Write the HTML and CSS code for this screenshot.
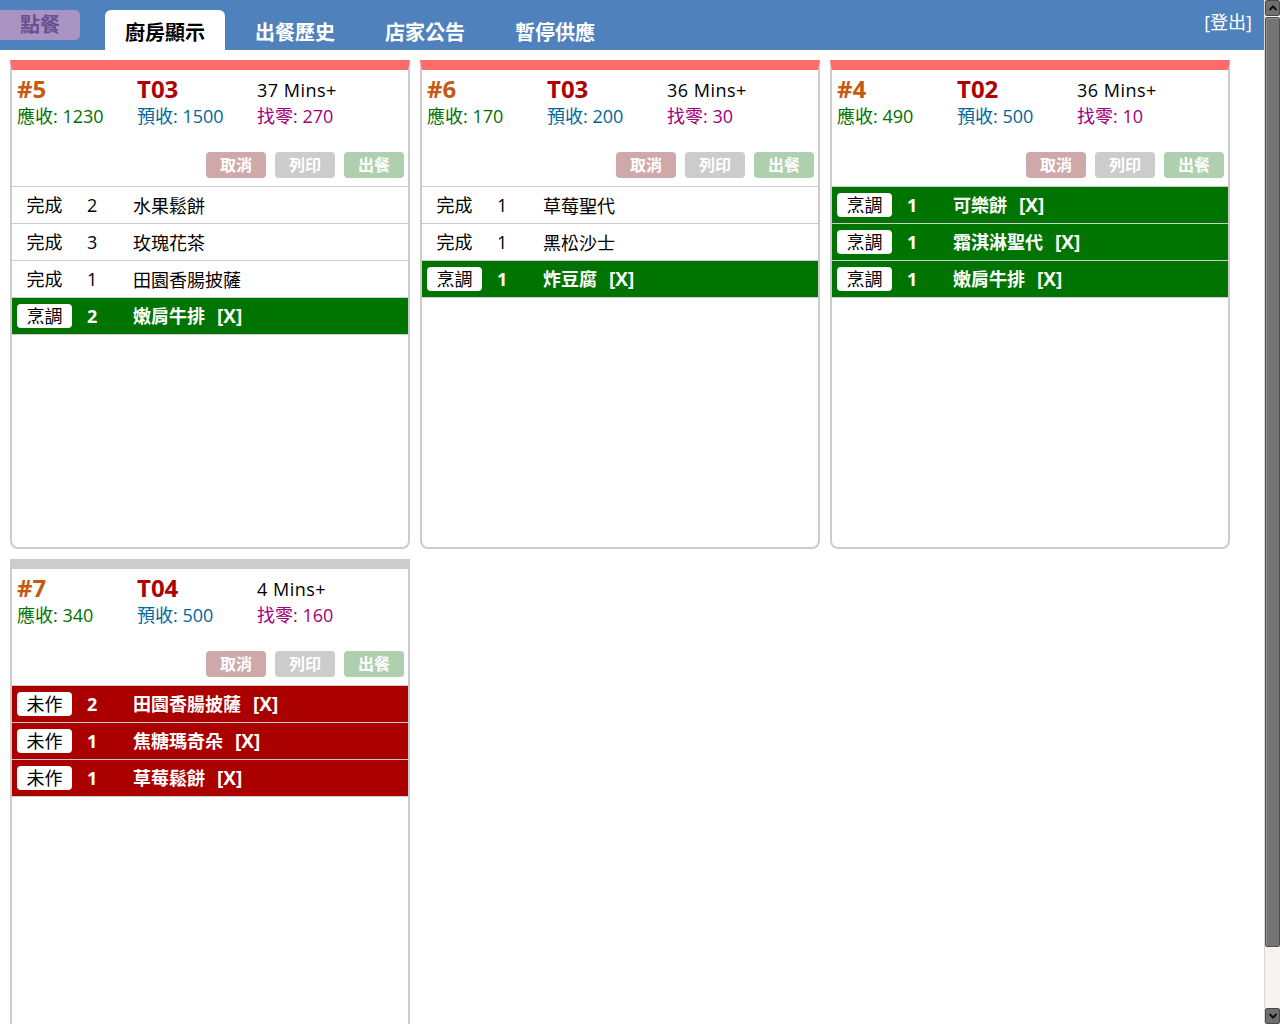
FILE: index.html
```html
<!DOCTYPE html>
<html lang="zh-Hant">
<head>
<meta charset="utf-8">
<title>廚房顯示</title>
<link rel="stylesheet" href="styles.css">
</head>
<body>
<header class="topbar">
  <a class="order-btn">點餐</a>
  <nav class="tabs">
    <span class="tab active">廚房顯示</span>
    <span class="tab">出餐歷史</span>
    <span class="tab">店家公告</span>
    <span class="tab">暫停供應</span>
  </nav>
  <a class="logout">[登出]</a>
</header>
<main class="board">
  <section class="card urgent">
    <div class="card-head">
      <div class="info-row top"><span class="no">#5</span><span class="table">T03</span><span class="mins">37 Mins+</span></div>
      <div class="info-row money"><span class="due">應收: 1230</span><span class="paid">預收: 1500</span><span class="change">找零: 270</span></div>
      <div class="actions"><button class="btn cancel">取消</button><button class="btn print">列印</button><button class="btn serve">出餐</button></div>
    </div>
    <ul class="items">
      <li class="item done"><span class="status">完成</span><span class="qty">2</span><span class="name">水果鬆餅</span></li>
      <li class="item done"><span class="status">完成</span><span class="qty">3</span><span class="name">玫瑰花茶</span></li>
      <li class="item done"><span class="status">完成</span><span class="qty">1</span><span class="name">田園香腸披薩</span></li>
      <li class="item cooking"><span class="status">烹調</span><span class="qty">2</span><span class="name">嫩肩牛排<span class="del">[X]</span></span></li>
    </ul>
  </section>
  <section class="card urgent">
    <div class="card-head">
      <div class="info-row top"><span class="no">#6</span><span class="table">T03</span><span class="mins">36 Mins+</span></div>
      <div class="info-row money"><span class="due">應收: 170</span><span class="paid">預收: 200</span><span class="change">找零: 30</span></div>
      <div class="actions"><button class="btn cancel">取消</button><button class="btn print">列印</button><button class="btn serve">出餐</button></div>
    </div>
    <ul class="items">
      <li class="item done"><span class="status">完成</span><span class="qty">1</span><span class="name">草莓聖代</span></li>
      <li class="item done"><span class="status">完成</span><span class="qty">1</span><span class="name">黑松沙士</span></li>
      <li class="item cooking"><span class="status">烹調</span><span class="qty">1</span><span class="name">炸豆腐<span class="del">[X]</span></span></li>
    </ul>
  </section>
  <section class="card urgent">
    <div class="card-head">
      <div class="info-row top"><span class="no">#4</span><span class="table">T02</span><span class="mins">36 Mins+</span></div>
      <div class="info-row money"><span class="due">應收: 490</span><span class="paid">預收: 500</span><span class="change">找零: 10</span></div>
      <div class="actions"><button class="btn cancel">取消</button><button class="btn print">列印</button><button class="btn serve">出餐</button></div>
    </div>
    <ul class="items">
      <li class="item cooking"><span class="status">烹調</span><span class="qty">1</span><span class="name">可樂餅<span class="del">[X]</span></span></li>
      <li class="item cooking"><span class="status">烹調</span><span class="qty">1</span><span class="name">霜淇淋聖代<span class="del">[X]</span></span></li>
      <li class="item cooking"><span class="status">烹調</span><span class="qty">1</span><span class="name">嫩肩牛排<span class="del">[X]</span></span></li>
    </ul>
  </section>
  <section class="card fresh">
    <div class="card-head">
      <div class="info-row top"><span class="no">#7</span><span class="table">T04</span><span class="mins">4 Mins+</span></div>
      <div class="info-row money"><span class="due">應收: 340</span><span class="paid">預收: 500</span><span class="change">找零: 160</span></div>
      <div class="actions"><button class="btn cancel">取消</button><button class="btn print">列印</button><button class="btn serve">出餐</button></div>
    </div>
    <ul class="items">
      <li class="item todo"><span class="status">未作</span><span class="qty">2</span><span class="name">田園香腸披薩<span class="del">[X]</span></span></li>
      <li class="item todo"><span class="status">未作</span><span class="qty">1</span><span class="name">焦糖瑪奇朵<span class="del">[X]</span></span></li>
      <li class="item todo"><span class="status">未作</span><span class="qty">1</span><span class="name">草莓鬆餅<span class="del">[X]</span></span></li>
    </ul>
  </section>
</main>
<div class="scrollbar" aria-hidden="true">
  <div class="sb-btn"><svg width="16" height="16" viewBox="0 0 16 16"><polyline points="4.5,10 8,6.5 11.5,10" fill="none" stroke="#111" stroke-width="2"/></svg></div>
  <div class="sb-thumb"></div>
  <div class="sb-track"></div>
  <div class="sb-btn"><svg width="16" height="16" viewBox="0 0 16 16"><polyline points="4.5,6 8,9.5 11.5,6" fill="none" stroke="#111" stroke-width="2"/></svg></div>
</div>
</body>
</html>
```
FILE: styles.css
```css
* { box-sizing: border-box; }

html, body {
  margin: 0;
  padding: 0;
}

body {
  font-family: "Open Sans", "Noto Sans CJK TC", sans-serif;
  color: #000;
  background: #fff;
  margin-right: 16px;
  padding-bottom: 44px;
}

.topbar {
  display: flex;
  align-items: flex-start;
  height: 50px;
  background: #4f81bd;
}

.order-btn {
  display: block;
  margin-top: 10px;
  width: 80px;
  height: 30px;
  line-height: 30px;
  text-align: center;
  background: #a893c3;
  color: #6a5090;
  font-size: 20px;
  font-weight: bold;
  border-radius: 0 5px 5px 0;
}

.tabs {
  display: flex;
  gap: 10px;
  margin-left: 25px;
  margin-top: 10px;
}

.tab {
  display: block;
  width: 120px;
  height: 40px;
  padding-top: 6px;
  line-height: 34px;
  text-align: center;
  font-size: 20px;
  font-weight: bold;
  color: #fff;
  border-radius: 6px 6px 0 0;
}

.tab.active {
  background: #fff;
  color: #000;
}

.logout {
  margin-left: auto;
  margin-right: 12px;
  margin-top: 10px;
  line-height: 24px;
  font-size: 18px;
  color: #fff;
}

.board {
  display: flex;
  flex-wrap: wrap;
  gap: 10px;
  padding: 10px;
}

.card {
  width: 400px;
  height: 489px;
  border: 2px solid #ccc;
  border-top-width: 10px;
  border-radius: 0 0 8px 8px;
  overflow: hidden;
}

.card.urgent { border-top-color: #ff6a6a; }
.card.fresh { border-top-color: #cccccc; }

.card-head {
  height: 117px;
  border-bottom: 1px solid #ccc;
  padding: 5px 4px 0 5px;
}

.info-row {
  display: flex;
}

.info-row span {
  width: 120px;
  flex: none;
}

.info-row.top {
  height: 28px;
  line-height: 28px;
}

.no {
  font-size: 24px;
  font-weight: bold;
  color: #c55a11;
}

.table {
  font-size: 24px;
  font-weight: bold;
  color: #b00000;
}

.mins {
  font-size: 18px;
  padding-top: 1px;
  letter-spacing: 0.5px;
}

.info-row.money {
  height: 26px;
  line-height: 26px;
  font-size: 18px;
}

.due { color: #007000; }
.paid { color: #00679b; }
.change { color: #a0007a; }

.actions {
  display: flex;
  justify-content: flex-end;
  gap: 9px;
  margin-top: 23px;
}

.btn {
  width: 60px;
  height: 26px;
  padding: 0;
  border: none;
  border-radius: 4px;
  font-family: inherit;
  font-size: 16px;
  font-weight: bold;
  line-height: 26px;
  color: #fff;
}

.btn.cancel { background: #cfa9a9; }
.btn.print { background: #cccccc; }
.btn.serve { background: #aed0ae; }

.items {
  list-style: none;
  margin: 0;
  padding: 0;
}

.item {
  display: flex;
  align-items: center;
  height: 37px;
  border-bottom: 1px solid #ccc;
  padding-left: 5px;
  padding-bottom: 1px;
  font-size: 18px;
}

.status {
  width: 55px;
  height: 24px;
  line-height: 24px;
  text-align: center;
  border-radius: 4px;
  color: #000;
  font-weight: normal;
}

.qty {
  width: 46px;
  margin-left: 15px;
}

.del {
  margin-left: 12px;
  font-size: 19px;
}

.item.cooking,
.item.todo {
  color: #fff;
  font-weight: bold;
}

.item.cooking { background: #007400; }
.item.todo { background: #aa0000; }

.item.cooking .status,
.item.todo .status {
  background: #fff;
}

.scrollbar {
  position: fixed;
  top: 0;
  right: 0;
  width: 16px;
  height: 100vh;
  display: flex;
  flex-direction: column;
  background: #f6f4ef;
  border-left: 1px solid #d8d8d8;
}

.sb-btn {
  flex: none;
  height: 16px;
  background: #6f6f6f;
  border: 1px solid #4a4a4a;
  border-radius: 2px;
}

.sb-btn svg {
  display: block;
  margin: -1px;
}

.sb-thumb {
  flex: none;
  height: 930px;
  margin-top: 1px;
  background: #747474;
  border: 1px solid #505050;
  box-shadow: inset 1px 1px 0 #8c8c8c;
  border-radius: 2px;
}

.sb-track {
  flex: 1;
}
```
